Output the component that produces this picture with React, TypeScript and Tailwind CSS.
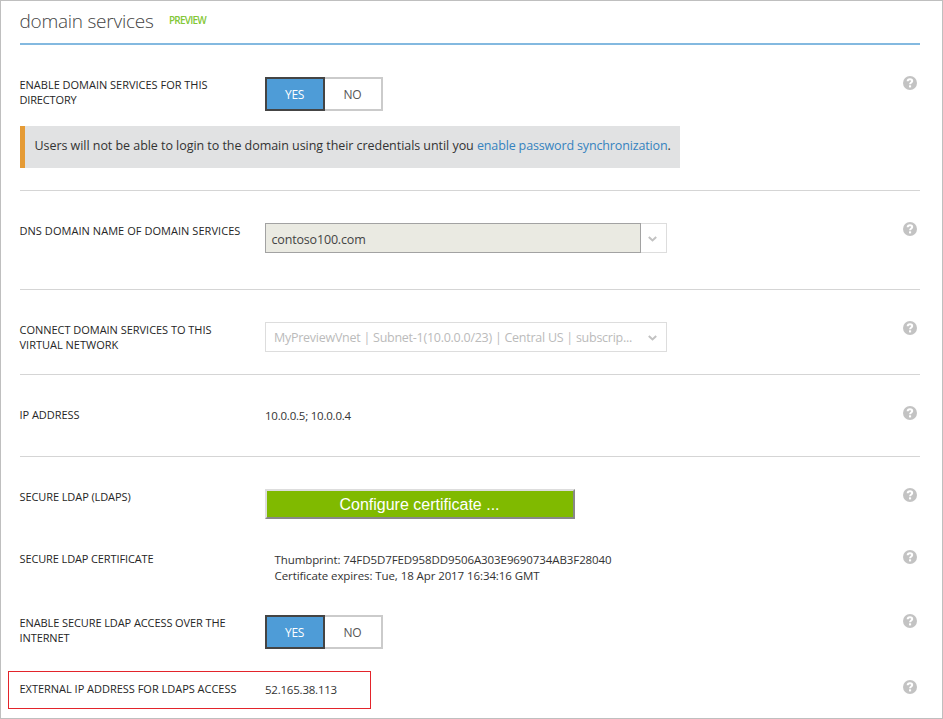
import type { ReactNode } from "react";

function HelpIcon() {
  return (
    <svg className="mr-[3px] block h-[14px] w-[14px] shrink-0" viewBox="0 0 14 14" aria-label="Help">
      <circle cx="7" cy="7" r="7" fill="#c3c3c3" />
      <path d="M4.7 5.3C4.7 3.8 5.7 3.3 7 3.3s2.2.6 2.2 1.8C9.2 6.5 7.1 6.6 7.1 8.3" fill="none" stroke="#fff" strokeWidth="2" />
      <rect x="6" y="9.3" width="2.1" height="2.1" fill="#fff" />
    </svg>
  );
}

function Chevron() {
  return (
    <svg className="block h-[6px] w-[9px]" viewBox="0 0 9 6" fill="none" stroke="#c2c2c2" strokeWidth="2">
      <path d="M0.8 0.9L4.5 4.4L8.2 0.9" />
    </svg>
  );
}

function Row({ label, height, children }: { label: ReactNode; height: string; children?: ReactNode }) {
  return (
    <div className={"flex items-start " + height}>
      <div className="w-[245px] shrink-0 whitespace-nowrap pt-px text-[11px] leading-[15px] text-[#262626]">
        <div className="-ml-[0.5px]">{label}</div>
      </div>
      <div className="min-w-0 flex-1">{children}</div>
      <HelpIcon />
    </div>
  );
}

function Toggle() {
  return (
    <div className="mt-px flex h-[34px] text-[12px] leading-[30px]">
      <button className="w-[60px] border-2 border-[#444444] bg-[#4e9cd7] pr-px pt-px text-center tracking-[-0.32px] text-white">YES</button>
      <button className="w-[58px] border-2 border-l-0 border-[#cbcbcb] bg-white pr-px pt-px text-center tracking-[-0.19px] text-[#555555]">NO</button>
    </div>
  );
}

function Divider() {
  return <div className="mb-[31px] h-px bg-[#d5d5d5]" />;
}

export default function App() {
  return (
    <main className="relative h-[719px] w-[943px] overflow-hidden border border-[#bfbfbf] bg-white pl-[19px] pr-[22px] font-['Open_Sans','Noto_Sans',sans-serif]">
      <header className="flex h-[44px] items-start border-b-2 border-[#83b9e0]">
        <h1 className="mt-[6px] w-[149px] whitespace-nowrap text-[19px] font-light leading-[28px] tracking-[-0.25px] text-[#444444]">
          <span className="-ml-[0.5px]">domain services</span>
        </h1>
        <span className="mt-[13px] text-[10px] font-semibold leading-[12px] tracking-[-0.78px] text-[#83c735]">PREVIEW</span>
      </header>

      <section className="pt-[31px]">
        <Row
          height="h-[50px]"
          label={
            <>
              <div className="tracking-[-0.013px]">ENABLE DOMAIN SERVICES FOR THIS</div>
              <div className="tracking-[-0.16px]">DIRECTORY</div>
            </>
          }
        >
          <Toggle />
        </Row>
        <div className="mb-[22px] h-[42px] w-[660px] whitespace-nowrap border-l-[5px] border-[#e59b36] bg-[#e1e2e3] pl-[9.5px] text-[12.5px] leading-[39px] text-[#333333]">
          <span className="tracking-[-0.048px]">Users will not be able to login to the domain using their credentials until you </span>
          <a className="tracking-[-0.145px] text-[#3583bf]">enable password synchronization</a>.
        </div>
      </section>

      <Divider />
      <Row height="h-[67px]" label={<div className="tracking-[0.05px]">DNS DOMAIN NAME OF DOMAIN SERVICES</div>}>
        <div className="mt-px flex h-[30px] w-[402px]">
          <div className="w-[376px] border border-[#a2a2a2] bg-[#eaeae2] pl-[5.5px] text-[12.5px] leading-[31px] tracking-[-0.17px] text-[#444444]">contoso100.com</div>
          <div className="flex flex-1 items-center justify-center border border-l-0 border-[#dddddd] pr-[3px] pt-[2px]">
            <Chevron />
          </div>
        </div>
      </Row>

      <Divider />
      <Row
        height="h-[53px]"
        label={
          <>
            <div className="tracking-[-0.027px]">CONNECT DOMAIN SERVICES TO THIS</div>
            <div>VIRTUAL NETWORK</div>
          </>
        }
      >
        <div className="mt-px flex h-[30px] w-[402px] items-center justify-between border border-[#dddddd] pl-[8px] pr-[9px]">
          <span className="whitespace-nowrap pt-[2px] text-[12.5px] tracking-[-0.26px] text-[#bbbbbb]">MyPreviewVnet | Subnet-1(10.0.0.0/23) | Central US | subscrip...</span>
          <div className="pt-[2px]">
            <Chevron />
          </div>
        </div>
      </Row>

      <Divider />
      <Row height="h-[50px]" label={<div className="tracking-[-0.04px]">IP ADDRESS</div>}>
        <div className="pt-[2px] text-[11.5px] leading-[16px] tracking-[-0.22px] text-[#333333]">10.0.0.5; 10.0.0.4</div>
      </Row>

      <Divider />
      <Row height="h-[62px]" label={<div className="tracking-[-0.09px]">SECURE LDAP (LDAPS)</div>}>
        <button className="mt-px block h-[30px] w-[310px] border-2 border-b-[#888888] border-l-[#dddddd] border-r-[#888888] border-t-[#dddddd] bg-[#80ba00] pr-px pt-px font-['Liberation_Sans',Arial,sans-serif] text-[16px] leading-[26px] text-white">
          Configure certificate ...
        </button>
      </Row>
      <Row height="h-[64px]" label={<div className="tracking-[-0.12px]">SECURE LDAP CERTIFICATE</div>}>
        <div className="whitespace-nowrap pl-[9.5px] pt-[2px] text-[11.5px] leading-[16px] tracking-[-0.09px] text-[#333333]">
          <div>Thumbprint: 74FD5D7FED958DD9506A303E9690734AB3F28040</div>
          <div>Certificate expires: Tue, 18 Apr 2017 16:34:16 GMT</div>
        </div>
      </Row>
      <Row
        height="h-[66px]"
        label={
          <>
            <div className="tracking-[-0.093px]">ENABLE SECURE LDAP ACCESS OVER THE</div>
            <div className="tracking-[-0.096px]">INTERNET</div>
          </>
        }
      >
        <Toggle />
      </Row>
      <Row height="h-[30px]" label={<div className="tracking-[-0.017px]">EXTERNAL IP ADDRESS FOR LDAPS ACCESS</div>}>
        <div className="pt-[2px] text-[11.5px] leading-[16px] tracking-[-0.22px] text-[#333333]">52.165.38.113</div>
      </Row>

      {/* Highlight drawn over the external IP address row */}
      <div className="pointer-events-none absolute left-[7px] top-[670px] h-[38px] w-[363px] border border-[#e3242b]" />
    </main>
  );
}
